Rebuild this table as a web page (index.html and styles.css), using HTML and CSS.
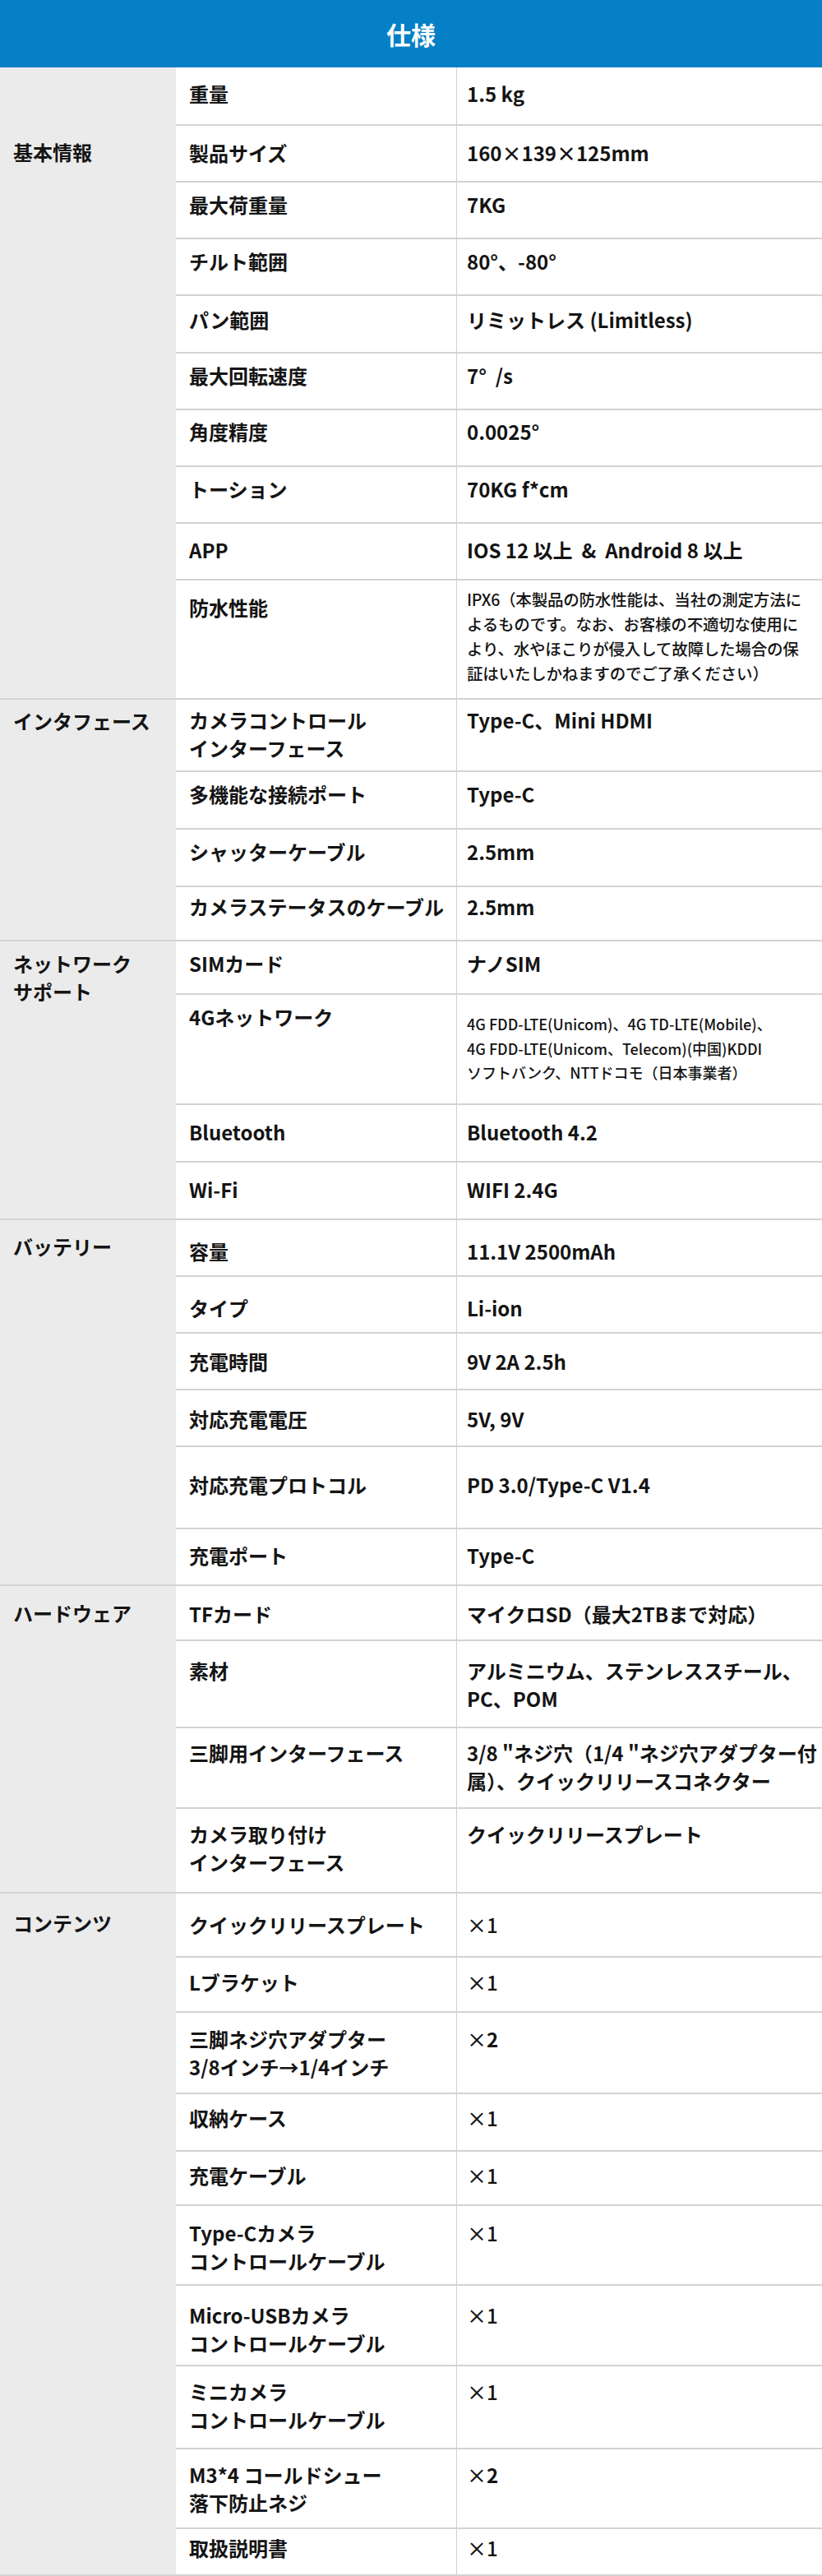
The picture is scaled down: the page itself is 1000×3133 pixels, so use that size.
FILE: index.html
```html
<!DOCTYPE html>
<html lang="ja">
<head>
<meta charset="utf-8">
<title>仕様</title>
<link rel="stylesheet" href="styles.css">
</head>
<body>
<div class="spec">
  <div class="title">仕様</div>

  <section class="group first">
    <div class="cat c86">基本情報</div>
    <div class="rows">
      <div class="row p15"><div class="k">重量</div><div class="v">1.5 kg</div></div>
      <div class="row p16"><div class="k">製品サイズ</div><div class="v">160×139×125mm</div></div>
      <div class="row p10"><div class="k">最大荷重量</div><div class="v">7KG</div></div>
      <div class="row p10"><div class="k">チルト範囲</div><div class="v">80°、-80°</div></div>
      <div class="row h70 p12"><div class="k">パン範囲</div><div class="v">リミットレス (Limitless)</div></div>
      <div class="row p10"><div class="k">最大回転速度</div><div class="v">7°&nbsp; /s</div></div>
      <div class="row p9"><div class="k">角度精度</div><div class="v">0.0025°</div></div>
      <div class="row p10"><div class="k">トーション</div><div class="v">70KG f*cm</div></div>
      <div class="row p15"><div class="k">APP</div><div class="v">IOS 12 以上&nbsp; &amp;&nbsp; Android 8 以上</div></div>
      <div class="row h145 p16"><div class="k">防水性能</div><div class="v note">IPX6（本製品の防水性能は、当社の測定方法に<br>よるものです。なお、お客様の不適切な使用に<br>より、水やほこりが侵入して故障した場合の保<br>証はいたしかねますのでご了承ください）</div></div>
    </div>
  </section>

  <section class="group">
    <div class="cat c9">インタフェース</div>
    <div class="rows">
      <div class="row h86 p8"><div class="k">カメラコントロール<br>インターフェース</div><div class="v">Type-C、Mini HDMI</div></div>
      <div class="row h70 p10"><div class="k">多機能な接続ポート</div><div class="v">Type-C</div></div>
      <div class="row h70 p10"><div class="k">シャッターケーブル</div><div class="v">2.5mm</div></div>
      <div class="row h66 p7"><div class="k">カメラステータスのケーブル</div><div class="v">2.5mm</div></div>
    </div>
  </section>

  <section class="group">
    <div class="cat c10">ネットワーク<br>サポート</div>
    <div class="rows">
      <div class="row h63 p10"><div class="k">SIMカード</div><div class="v">ナノSIM</div></div>
      <div class="row h134 p10"><div class="k">4Gネットワーク</div><div class="v note net">4G FDD-LTE(Unicom)、4G TD-LTE(Mobile)、<br>4G FDD-LTE(Unicom、Telecom)(中国)KDDI<br>ソフトバンク、NTTドコモ（日本事業者）</div></div>
      <div class="row h70 p16"><div class="k">Bluetooth</div><div class="v">Bluetooth 4.2</div></div>
      <div class="row h70 p16"><div class="k">Wi-Fi</div><div class="v">WIFI 2.4G</div></div>
    </div>
  </section>

  <section class="group">
    <div class="cat c15">バッテリー</div>
    <div class="rows">
      <div class="row h67 p21"><div class="k">容量</div><div class="v">11.1V 2500mAh</div></div>
      <div class="row p21"><div class="k">タイプ</div><div class="v">Li-ion</div></div>
      <div class="row p17"><div class="k">充電時間</div><div class="v">9V 2A 2.5h</div></div>
      <div class="row p18"><div class="k">対応充電電圧</div><div class="v">5V, 9V</div></div>
      <div class="row h100 p29"><div class="k">対応充電プロトコル</div><div class="v">PD 3.0/Type-C V1.4</div></div>
      <div class="row p15"><div class="k">充電ポート</div><div class="v">Type-C</div></div>
    </div>
  </section>

  <section class="group">
    <div class="cat c16">ハードウェア</div>
    <div class="rows">
      <div class="row h65 p17"><div class="k">TFカード</div><div class="v">マイクロSD（最大2TBまで対応）</div></div>
      <div class="row h106 p19"><div class="k">素材</div><div class="v">アルミニウム、ステンレススチール、<br>PC、POM</div></div>
      <div class="row h98 p13"><div class="k">三脚用インターフェース</div><div class="v">3/8 "ネジ穴（1/4 "ネジ穴アダプター付<br>属）、クイックリリースコネクター</div></div>
      <div class="row h103 p14"><div class="k">カメラ取り付け<br>インターフェース</div><div class="v">クイックリリースプレート</div></div>
    </div>
  </section>

  <section class="group">
    <div class="cat c19">コンテンツ</div>
    <div class="rows">
      <div class="row h76 p21"><div class="k">クイックリリースプレート</div><div class="v qty">×1</div></div>
      <div class="row h67 p13"><div class="k">Lブラケット</div><div class="v qty">×1</div></div>
      <div class="row h99 p15"><div class="k">三脚ネジ穴アダプター<br>3/8インチ→1/4インチ</div><div class="v qty">×<b>2</b></div></div>
      <div class="row h70 p12"><div class="k">収納ケース</div><div class="v qty">×1</div></div>
      <div class="row h66 p12"><div class="k">充電ケーブル</div><div class="v qty">×1</div></div>
      <div class="row h97 p16"><div class="k">Type-Cカメラ<br>コントロールケーブル</div><div class="v qty">×1</div></div>
      <div class="row h98 p19"><div class="k">Micro-USBカメラ<br>コントロールケーブル</div><div class="v qty">×1</div></div>
      <div class="row h101 p14"><div class="k">ミニカメラ<br>コントロールケーブル</div><div class="v qty">×1</div></div>
      <div class="row h97 p14"><div class="k">M3*4 コールドシュー<br>落下防止ネジ</div><div class="v qty">×<b>2</b></div></div>
      <div class="row h57 p6"><div class="k">取扱説明書</div><div class="v qty">×1</div></div>
    </div>
  </section>
</div>
</body>
</html>
```

FILE: styles.css
```css
html, body {
  margin: 0;
  padding: 0;
  background: #ffffff;
}

body {
  font-family: "Noto Sans CJK JP", "Noto Sans", sans-serif;
  color: #141414;
}

.spec {
  width: 1000px;
  border-bottom: 2px solid #d3d3d3;
}

.title {
  height: 82px;
  background: #0580c6;
  color: #ffffff;
  font-size: 30px;
  font-weight: 700;
  display: flex;
  align-items: center;
  justify-content: center;
}

.group {
  display: flex;
  border-top: 2px solid #d3d3d3;
}

.group.first {
  border-top: none;
}

.cat {
  flex: none;
  width: 217px;
  box-sizing: border-box;
  background: #ebebeb;
  padding-left: 16px;
  font-size: 24px;
  font-weight: 700;
  line-height: 34px;
  white-space: nowrap;
}

.c86 { padding-top: 86px; }
.c9 { padding-top: 9px; }
.c10 { padding-top: 10px; }
.c15 { padding-top: 15px; }
.c16 { padding-top: 16px; }
.c19 { padding-top: 19px; }

.rows {
  flex: 1;
  display: flex;
  flex-direction: column;
  margin-left: -3px;
}

.row {
  display: grid;
  grid-template-columns: 342px 1fr;
  box-sizing: border-box;
  height: 69px;
  border-top: 2px solid #d3d3d3;
  font-size: 24px;
  font-weight: 700;
  line-height: 34px;
}

.row:first-child {
  border-top: none;
}

.k {
  border-right: 1px solid #cfcfcf;
  padding-left: 16px;
  white-space: nowrap;
  background: #ffffff;
}

.v {
  padding-left: 12px;
  white-space: nowrap;
}

.v.note {
  font-size: 19.5px;
  line-height: 30px;
  font-weight: 500;
  padding-top: 8px;
  letter-spacing: -0.2px;
}

.v.note.net {
  font-size: 18px;
  line-height: 29.5px;
  padding-top: 21px;
  letter-spacing: 0;
}

.v.qty {
  font-weight: 500;
}

.v.qty b {
  font-weight: 700;
}

/* row heights */
.h57 { height: 57px; }
.h63 { height: 63px; }
.h65 { height: 65px; }
.h66 { height: 66px; }
.h67 { height: 67px; }
.h70 { height: 70px; }
.h76 { height: 76px; }
.h86 { height: 86px; }
.h97 { height: 97px; }
.h98 { height: 98px; }
.h99 { height: 99px; }
.h100 { height: 100px; }
.h101 { height: 101px; }
.h103 { height: 103px; }
.h106 { height: 106px; }
.h134 { height: 134px; }
.h145 { height: 145px; }

/* text offsets inside rows */
.p6 > div { padding-top: 6px; }
.p7 > div { padding-top: 7px; }
.p8 > div { padding-top: 8px; }
.p9 > div { padding-top: 9px; }
.p10 > div { padding-top: 10px; }
.p12 > div { padding-top: 12px; }
.p13 > div { padding-top: 13px; }
.p14 > div { padding-top: 14px; }
.p15 > div { padding-top: 15px; }
.p16 > div { padding-top: 16px; }
.p17 > div { padding-top: 17px; }
.p18 > div { padding-top: 18px; }
.p19 > div { padding-top: 19px; }
.p21 > div { padding-top: 21px; }
.p29 > div { padding-top: 29px; }
```
